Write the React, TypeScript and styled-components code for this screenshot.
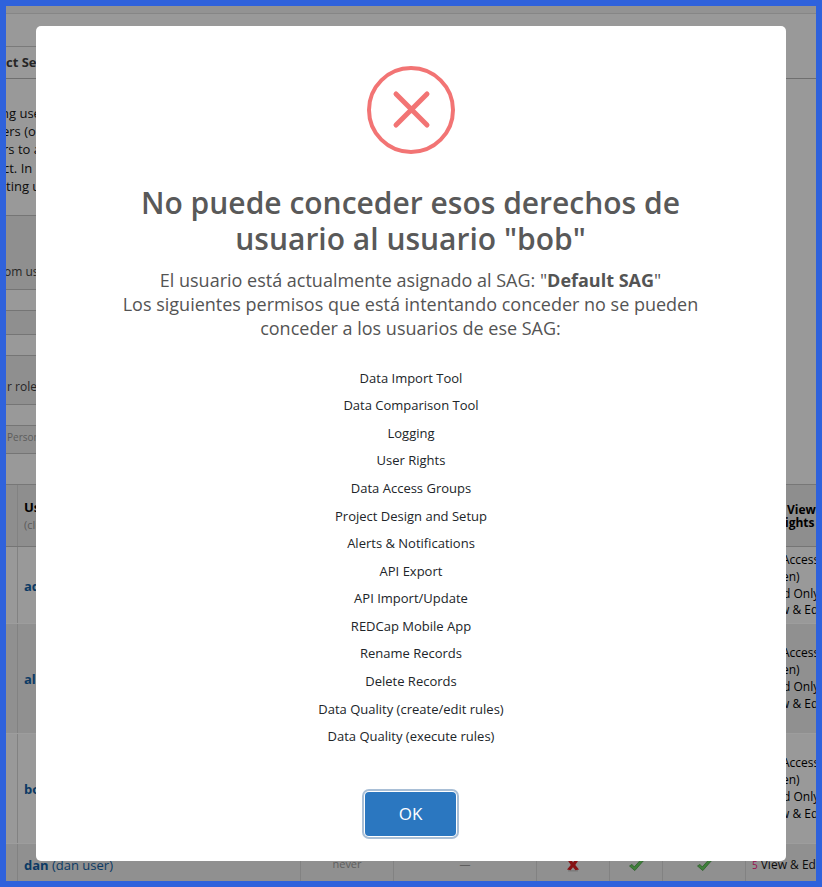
import React from "react";
import styled, { createGlobalStyle } from "styled-components";

const Global = createGlobalStyle`
  * { box-sizing: border-box; }
  body { margin: 0; font-family: "Open Sans", "Noto Sans", sans-serif; }
`;

const Frame = styled.div`
  position: relative;
  width: 822px;
  height: 887px;
  border: 6px solid #2f62dc;
  background: #999;
  overflow: hidden;
`;

const Page = styled.div`
  display: flex;
  flex-direction: column;
  height: 875px;
  font-size: 13px;
  color: #0c0c0c;
  white-space: nowrap;
  overflow: hidden;
  & > * { flex-shrink: 0; }
`;

const TopStrip = styled.div`
  height: 8px;
  background: #939393;
  border-bottom: 1px solid #868686;
`;

const TabBar = styled.div`
  height: 65px;
  padding-top: 32px;
  border-bottom: 1px solid #6f6f6f;
`;

const Tab = styled.div`
  width: 150px;
  height: 32px;
  border-top: 1px solid #7a7a7a;
  line-height: 31px;
  font-weight: 700;
  color: #262626;
`;

const Intro = styled.div`
  height: 136px;
  padding-top: 25px;
`;

const Line = styled.div<{ $shift: number }>`
  margin-left: ${(p) => p.$shift}px;
  height: 18.2px;
  line-height: 18px;
`;

const Panel = styled.div<{ $h: number; $gap: number; $pad?: number }>`
  width: 720px;
  height: ${(p) => p.$h}px;
  margin-bottom: ${(p) => p.$gap}px;
  padding-top: ${(p) => p.$pad ?? 0}px;
  background: #8f8f8f;
  border: solid #757575;
  border-width: 1px 0;
`;

const PanelText = styled.div<{ $shift: number; $small?: boolean }>`
  margin-left: ${(p) => p.$shift}px;
  font-size: ${(p) => (p.$small ? 10 : 12)}px;
  line-height: 16px;
  color: ${(p) => (p.$small ? "#5c5c5c" : "#262626")};
`;

const Table = styled.div`
  display: flex;
  flex-direction: column;
  border-top: 1px solid #777;
`;

const Row = styled.div<{ $h: number; $dark?: boolean; $head?: boolean }>`
  display: grid;
  grid-template-columns: 12px 283px 93px 143px 73px 53px 83px 1fr;
  height: ${(p) => p.$h}px;
  background: ${(p) => (p.$head ? "#8e8e8e" : p.$dark ? "#909090" : "#999")};
  border-bottom: 1px solid ${(p) => (p.$head ? "#757575" : "#9d9d9d")};
`;

const Cell = styled.div<{ $center?: boolean }>`
  display: flex;
  flex-direction: column;
  justify-content: center;
  align-items: ${(p) => (p.$center ? "center" : "flex-start")};
  padding-left: ${(p) => (p.$center ? 0 : 6)}px;
  border-right: 1px solid #828282;
  overflow: hidden;
  &:last-child { border-right: 0; }
`;

const User = styled.div<{ $drop?: number }>`
  color: #0c3a64;
  line-height: 18px;
  padding-top: ${(p) => p.$drop ?? 1}px;
  b { font-weight: 700; }
`;

const HeadTitle = styled.div`
  font-weight: 700;
  line-height: 18px;
  color: #000;
`;

const Hint = styled.div`
  font-size: 11px;
  line-height: 17px;
  color: #5a5a5a;
`;

const RightsHead = styled.div`
  padding-left: 35px;
  font-size: 12px;
  font-weight: 700;
  line-height: 13px;
  color: #000;
  & + & { padding-left: 33px; }
`;

const Rights = styled.div`
  padding-top: 1px;
  font-size: 12px;
  line-height: 16.9px;
  color: #000;
`;

const RightsLine = styled.div<{ $in: number }>`
  padding-left: ${(p) => p.$in}px;
`;

const LastRights = styled.div`
  font-size: 12px;
  line-height: 16px;
  padding-top: 3px;
  span { color: #97104f; font-size: 10px; margin-right: 3px; }
`;

const Muted = styled.div`
  font-size: 11px;
  line-height: 16px;
  padding-top: 2px;
  color: #5e5e5e;
`;

const Mark = styled.svg`
  display: block;
  width: 16px;
  height: 16px;
  margin-top: 3px;
`;

const Overlay = styled.div`
  position: absolute;
  inset: 0;
  padding: 20px 30px;
`;

const Dialog = styled.div`
  display: flex;
  flex-direction: column;
  align-items: center;
  width: 750px;
  height: 835px;
  padding: 40px 1px 0 0;
  border-radius: 5px;
  background: #fff;
  color: #545454;
  text-align: center;
`;

const ErrorIcon = styled.svg`
  display: block;
  width: 88px;
  height: 88px;
  margin-left: 1px;
`;

const Title = styled.h2`
  width: 600px;
  margin: 31px 0 0;
  font-size: 30px;
  font-weight: 600;
  line-height: 36px;
  color: #595959;
`;

const Message = styled.div`
  width: 600px;
  margin-top: 11px;
  font-size: 18px;
  line-height: 24px;
`;

const List = styled.ul`
  height: 386px;
  margin: 24.7px 0 0;
  padding: 0 0 0 1px;
  list-style: none;
  font-size: 13px;
  line-height: 27.58px;
  color: #212529;
`;

const OkButton = styled.button`
  width: 91px;
  height: 44px;
  margin-top: 41.3px;
  padding: 0;
  border: 0;
  border-radius: 4px;
  background: #2b77c0;
  box-shadow: 0 0 0 1px #fff, 0 0 0 3px #a9bfd6;
  color: #fff;
  font: 400 17px "Open Sans", sans-serif;
`;

const permissions = [
  "Data Import Tool",
  "Data Comparison Tool",
  "Logging",
  "User Rights",
  "Data Access Groups",
  "Project Design and Setup",
  "Alerts & Notifications",
  "API Export",
  "API Import/Update",
  "REDCap Mobile App",
  "Rename Records",
  "Delete Records",
  "Data Quality (create/edit rules)",
  "Data Quality (execute rules)",
];

const users = [
  { name: "ad", height: 77, dark: false },
  { name: "al", height: 110, dark: true },
  { name: "bo", height: 110, dark: false },
];

const Tick = () => (
  <Mark viewBox="0 0 16 16">
    <path d="M1.5 9 4 7.4 6.2 10 12.8 2.8 15.2 4 6.8 13.6Z" fill="#3f7f3a" stroke="#2c5f2a" strokeWidth=".8" />
  </Mark>
);

const Cross = () => (
  <Mark viewBox="0 0 16 16">
    <path d="M3 13.8h10" stroke="#777" strokeWidth="1.2" />
    <path d="M2.5 3 6 2.5 8 5.6 10.5 2.5 13.6 3 10.3 8 14 12.6 10.5 13.2 8 10.3 5.6 13.2 2 12.6 5.8 8Z" fill="#861214" />
  </Mark>
);

export default function App() {
  return (
    <>
      <Global />
      <Frame>
        <Page>
          <TopStrip />
          <TabBar>
            <Tab>ct Se</Tab>
          </TabBar>
          <Intro>
            <Line $shift={-5}>ng use</Line>
            <Line $shift={-4}>ers (o</Line>
            <Line $shift={-3}>rs to a</Line>
            <Line $shift={-3}>ct. In</Line>
            <Line $shift={0}>ting u</Line>
          </Intro>
          <Panel $h={75} $gap={20} $pad={48}>
            <PanelText $shift={-2}>om us</PanelText>
          </Panel>
          <Panel $h={25} $gap={20} />
          <Panel $h={50} $gap={20} $pad={23}>
            <PanelText $shift={1}>r role</PanelText>
          </Panel>
          <Panel $h={29} $gap={30} $pad={3}>
            <PanelText $shift={1} $small>Person</PanelText>
          </Panel>
          <Table>
            <Row $h={62} $head>
              <Cell />
              <Cell>
                <HeadTitle>Us</HeadTitle>
                <Hint>(cli</Hint>
              </Cell>
              <Cell /><Cell /><Cell /><Cell /><Cell />
              <Cell>
                <RightsHead>View</RightsHead>
                <RightsHead>ights</RightsHead>
              </Cell>
            </Row>
            {users.map((u) => (
              <Row key={u.name} $h={u.height} $dark={u.dark}>
                <Cell />
                <Cell><User><b>{u.name}</b></User></Cell>
                <Cell /><Cell /><Cell /><Cell /><Cell />
                <Cell>
                  <Rights>
                    <RightsLine $in={30}>Access</RightsLine>
                    <RightsLine $in={30}>en)</RightsLine>
                    <RightsLine $in={31}>d Only</RightsLine>
                    <RightsLine $in={28}>w &amp; Ed</RightsLine>
                  </Rights>
                </Cell>
              </Row>
            ))}
            <Row $h={39} $dark>
              <Cell />
              <Cell><User $drop={3}><b>dan</b> (dan user)</User></Cell>
              <Cell $center><Muted>never</Muted></Cell>
              <Cell $center><Muted>—</Muted></Cell>
              <Cell $center><Cross /></Cell>
              <Cell $center><Tick /></Cell>
              <Cell $center><Tick /></Cell>
              <Cell><LastRights><span>5</span>View &amp; Ed</LastRights></Cell>
            </Row>
          </Table>
        </Page>
        <Overlay>
          <Dialog role="dialog">
            <ErrorIcon viewBox="0 0 88 88" fill="none" stroke="#f27474">
              <circle cx="44" cy="44" r="42" strokeWidth="4" />
              <path d="M29 28 60 59M60 28 29 59" strokeWidth="5" strokeLinecap="round" />
            </ErrorIcon>
            <Title>No puede conceder esos derechos de usuario al usuario "bob"</Title>
            <Message>
              El usuario está actualmente asignado al SAG: "<b>Default SAG</b>"<br />
              Los siguientes permisos que está intentando conceder no se pueden conceder a los usuarios de ese SAG:
            </Message>
            <List>
              {permissions.map((p) => <li key={p}>{p}</li>)}
            </List>
            <OkButton>OK</OkButton>
          </Dialog>
        </Overlay>
      </Frame>
    </>
  );
}
